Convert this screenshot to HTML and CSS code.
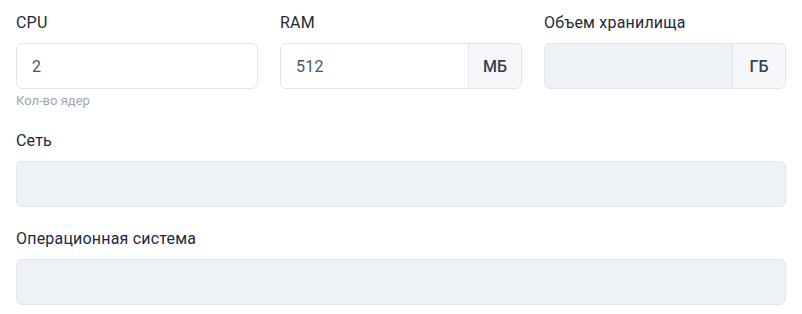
FILE: index.html
```html
<!DOCTYPE html>
<html lang="ru">
<head>
    <meta charset="UTF-8">
    <meta name="viewport" content="width=device-width, initial-scale=1.0">
    <title>Параметры сервера</title>
    <link rel="stylesheet" href="styles.css">
</head>
<body>
    <div class="form">
        <div class="row">
            <div class="field">
                <label class="label" for="cpu">CPU</label>
                <input class="input" type="text" id="cpu" value="2">
                <div class="hint">Кол-во ядер</div>
            </div>
            <div class="field">
                <label class="label" for="ram">RAM</label>
                <div class="group">
                    <input class="input" type="text" id="ram" value="512">
                    <span class="suffix">МБ</span>
                </div>
            </div>
            <div class="field">
                <label class="label" for="disk">Объем хранилища</label>
                <div class="group">
                    <input class="input" type="text" id="disk" disabled>
                    <span class="suffix">ГБ</span>
                </div>
            </div>
        </div>

        <div class="field">
            <label class="label" for="network">Сеть</label>
            <input class="input" type="text" id="network" disabled>
        </div>

        <div class="field">
            <label class="label" for="os">Операционная система</label>
            <input class="input" type="text" id="os" disabled>
        </div>
    </div>
</body>
</html>
```

FILE: styles.css
```css
body {
    margin: 0;
    padding: 11px 16px 0;
    font-family: Roboto, "Noto Sans", Arial, sans-serif;
    color: #1f2937;
    background: #fff;
}
.form {
    display: flex;
    flex-direction: column;
    gap: 20px;
}
.row {
    display: grid;
    grid-template-columns: repeat(3, 1fr);
    gap: 22px;
}
.field {
    display: flex;
    flex-direction: column;
}
.label {
    font-size: 16px;
    line-height: 24px;
    letter-spacing: 0.2px;
    margin-bottom: 8px;
}
.input {
    box-sizing: border-box;
    width: 100%;
    height: 46px;
    padding: 0 15px;
    font-family: inherit;
    font-size: 16px;
    letter-spacing: 0.2px;
    color: #4b5563;
    background: #fff;
    border: 1px solid #e3e6ea;
    border-radius: 6px;
    outline: none;
}
.input:disabled {
    background: #eef1f5;
}
.group {
    display: flex;
}
.group .input {
    flex: 1;
    min-width: 0;
    border-radius: 6px 0 0 6px;
}
.suffix {
    box-sizing: border-box;
    width: 53px;
    height: 46px;
    display: flex;
    align-items: center;
    justify-content: center;
    font-size: 16px;
    font-weight: 500;
    color: #3a4250;
    background: #f5f7fa;
    border: 1px solid #e3e6ea;
    border-left: none;
    border-radius: 0 6px 6px 0;
}
.hint {
    margin-top: 4px;
    font-size: 13px;
    line-height: 16px;
    color: #a0a6b1;
}
```
